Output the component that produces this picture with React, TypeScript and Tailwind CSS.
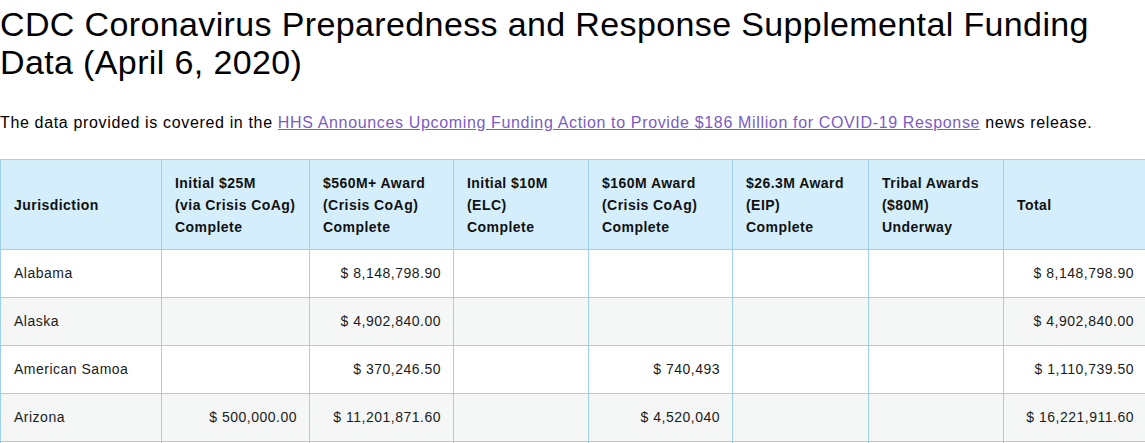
import React from 'react'

const headers = [
  ['Jurisdiction'],
  ['Initial $25M', '(via Crisis CoAg)', 'Complete'],
  ['$560M+ Award', '(Crisis CoAg)', 'Complete'],
  ['Initial $10M', '(ELC)', 'Complete'],
  ['$160M Award', '(Crisis CoAg)', 'Complete'],
  ['$26.3M Award', '(EIP)', 'Complete'],
  ['Tribal Awards', '($80M)', 'Underway'],
  ['Total'],
]

const widths = [161, 148, 144, 135, 144, 136, 135, 143]

const rows: string[][] = [
  ['Alabama', '', '$ 8,148,798.90', '', '', '', '', '$ 8,148,798.90'],
  ['Alaska', '', '$ 4,902,840.00', '', '', '', '', '$ 4,902,840.00'],
  ['American Samoa', '', '$ 370,246.50', '', '$ 740,493', '', '', '$ 1,110,739.50'],
  ['Arizona', '$ 500,000.00', '$ 11,201,871.60', '', '$ 4,520,040', '', '', '$ 16,221,911.60'],
  ['Arkansas', '', '$ 5,201,553.00', '', '', '', '', '$ 5,201,553.00'],
]

export default function App() {
  return (
    <div className="w-[1145px] h-[443px] overflow-hidden bg-white text-[#1b1b1b] font-['Liberation_Sans',Arial,sans-serif]">
      <h1 className="pt-[5px] text-[34px] leading-[38px] tracking-[0.37px] text-black font-normal">
        CDC Coronavirus Preparedness and Response Supplemental Funding Data (April 6, 2020)
      </h1>

      <p className="mt-[30px] text-[16px] leading-[24px] tracking-[0.65px] text-black">
        The data provided is covered in the{' '}
        <a href="#" className="text-[#7b5cc4] underline">
          HHS Announces Upcoming Funding Action to Provide $186 Million for COVID-19 Response
        </a>{' '}
        news release.
      </p>

      {/* funding table */}
      <table className="mt-[24px] w-[1146px] table-fixed border-collapse text-[14px] tracking-[0.5px]">
        <colgroup>
          {widths.map((w, i) => (
            <col key={i} style={{ width: w }} />
          ))}
        </colgroup>
        <thead>
          <tr className="bg-[#d4eefc]">
            {headers.map((h, i) => (
              <th
                key={i}
                className="border border-[#9fcfee] px-[13px] pt-[12px] pb-[11px] text-left align-middle font-bold leading-[22px] tracking-[0.45px] text-[#111]"
              >
                {h.map((line, j) => (
                  <div key={j} className="whitespace-nowrap">{line}</div>
                ))}
              </th>
            ))}
          </tr>
        </thead>
        <tbody>
          {rows.map((r, i) => (
            <tr key={i} className={i % 2 === 1 ? 'bg-[#f5f6f6]' : 'bg-white'}>
              {r.map((c, j) => (
                <td
                  key={j}
                  className={
                    'border border-[#9fcfee] py-[12px] leading-[23px] whitespace-nowrap ' +
                    (j === 0 ? 'pl-[13px] pr-[12px] text-left' : 'pl-[12px] pr-[12px] text-right')
                  }
                >
                  {c}
                </td>
              ))}
            </tr>
          ))}
        </tbody>
      </table>
    </div>
  )
}
